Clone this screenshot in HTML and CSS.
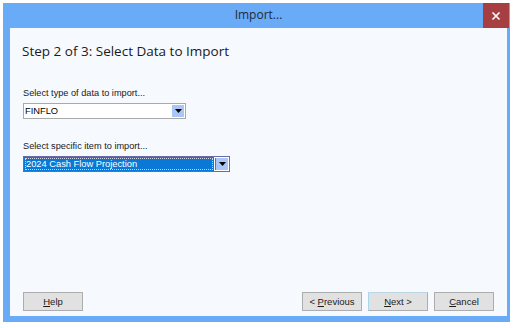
FILE: index.html
```html
<!DOCTYPE html>
<html>
<head>
<meta charset="utf-8">
<link rel="stylesheet" href="styles.css">
</head>
<body>
<div class="window">
  <div class="titlebar">
    <span class="title">Import...</span>
    <div class="close">
      <svg width="10" height="10" viewBox="0 0 10 10"><path d="M1.5 1.5 L8.5 8.5 M8.5 1.5 L1.5 8.5" stroke="#fff" stroke-width="1.6"/></svg>
    </div>
  </div>
  <div class="content">
    <h1 class="heading">Step 2 of 3: Select Data to Import</h1>
    <div class="field field-type">
      <label class="label">Select type of data to import...</label>
      <div class="combo combo-type">
        <span class="combo-text">FINFLO</span>
        <span class="combo-btn"><svg width="7" height="4" viewBox="0 0 7 4"><path d="M0 0 H7 L3.5 4 Z" fill="#000"/></svg></span>
      </div>
    </div>
    <div class="field field-item">
      <label class="label">Select specific item to import...</label>
      <div class="combo combo-item">
        <span class="combo-text selected"><span class="focus">2024 Cash Flow Projection</span></span>
        <span class="combo-btn"><svg width="7" height="4" viewBox="0 0 7 4"><path d="M0 0 H7 L3.5 4 Z" fill="#000"/></svg></span>
      </div>
    </div>
    <div class="spacer"></div>
    <div class="buttons">
      <button class="btn"><u>H</u>elp</button>
      <div class="nav">
        <button class="btn">&lt; <u>P</u>revious</button>
        <button class="btn btn-default"><u>N</u>ext &gt;</button>
        <button class="btn"><u>C</u>ancel</button>
      </div>
    </div>
  </div>
</div>
</body>
</html>
```

FILE: styles.css
```css
html, body {
  margin: 0;
  padding: 0;
  background: #ffffff;
}
body {
  padding: 3px 0 0 3px;
  font-family: "Liberation Sans", Arial, sans-serif;
}
.window {
  width: 507px;
  height: 319px;
  background: #6aabf7;
  display: flex;
  flex-direction: column;
  box-sizing: border-box;
  padding: 0 3px 6px 7px;
}
.titlebar {
  height: 25px;
  display: flex;
  align-items: center;
  justify-content: center;
  position: relative;
}
.title {
  font-family: "Open Sans", sans-serif;
  font-size: 12px;
  color: #1d2a3a;
  margin-top: -2px;
}
.close {
  position: absolute;
  right: -2px;
  top: 0;
  width: 26px;
  height: 25px;
  background: #a73e41;
  display: flex;
  align-items: center;
  justify-content: center;
}
.content {
  flex: 1;
  background: #f6f9fe;
  display: flex;
  flex-direction: column;
  padding: 14px 13px 5px 12px;
}
.heading {
  margin: 0;
  font-family: "Open Sans", sans-serif;
  font-weight: normal;
  font-size: 13.5px;
  color: #1a1a1a;
  line-height: 18px;
}
.field {
  display: flex;
  flex-direction: column;
  gap: 4px;
}
.field-type {
  margin-top: 27px;
}
.field-item {
  margin-top: 21px;
}
.label {
  font-size: 9.2px;
  color: #1a1a1a;
  line-height: 12px;
  padding-left: 1px;
}
.combo {
  display: flex;
  align-items: stretch;
  height: 16px;
  box-sizing: border-box;
  border: 1px solid #a9a9a9;
  background: #fff;
  margin-left: 1px;
}
.combo-type {
  width: 163px;
}
.combo-item {
  width: 207px;
  border-color: #6a6aa8;
}
.combo-text {
  flex: 1;
  font-size: 9.3px;
  color: #000;
  line-height: 14px;
  padding-left: 1px;
}
.combo-text.selected {
  background: #0a78d6;
  color: #fff;
  padding: 1px;
  margin: 0;
  display: flex;
}
.focus {
  flex: 1;
  border: 1px dotted #d0d8e0;
  line-height: 10px;
  padding-left: 0;
}
.combo-btn {
  width: 12px;
  margin: 1px;
  background: #a9c6f6;
  display: flex;
  align-items: center;
  justify-content: center;
}
.combo-item .combo-btn {
  margin-left: 1px;
  border-left: 1px solid #6a6aa8;
}
.spacer {
  flex: 1;
}
.buttons {
  display: flex;
  justify-content: space-between;
  align-items: center;
  padding-left: 1px;
  padding-right: 0;
}
.nav {
  display: flex;
  gap: 6px;
}
.btn {
  width: 60px;
  height: 19px;
  box-sizing: border-box;
  background: #e1e1e1;
  border: 1px solid #adadad;
  font-family: "Liberation Sans", Arial, sans-serif;
  font-size: 9.5px;
  color: #1a1a1a;
  padding: 0;
}
.btn-default {
  border-color: #bcd6e6 #adadad #adadad #a9d6ea;
}
```
